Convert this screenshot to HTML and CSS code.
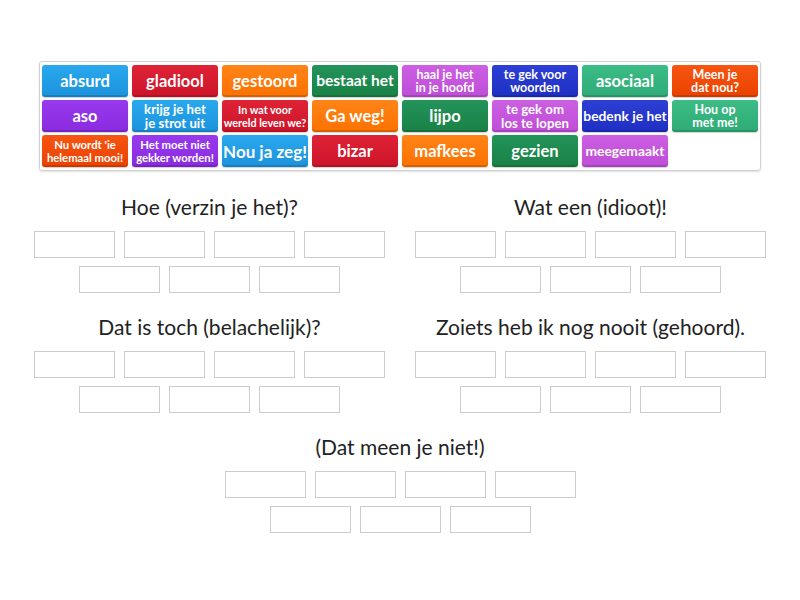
FILE: index.html
```html
<!DOCTYPE html>
<html lang="nl">
<head>
<meta charset="utf-8">
<title>Groepsindeling</title>
<link rel="stylesheet" href="styles.css">
</head>
<body>
<div class="bank">
  <div class="tile blue fs16">absurd</div>
  <div class="tile red fs16">gladiool</div>
  <div class="tile orange fs16">gestoord</div>
  <div class="tile green fs15">bestaat het</div>
  <div class="tile pink fs12">haal je het<br>in je hoofd</div>
  <div class="tile navy fs12">te gek voor<br>woorden</div>
  <div class="tile teal fs16">asociaal</div>
  <div class="tile flame fs12">Meen je<br>dat nou?</div>

  <div class="tile purple fs16">aso</div>
  <div class="tile blue fs13">krijg je het<br>je strot uit</div>
  <div class="tile red fs10">In wat voor<br>wereld leven we?</div>
  <div class="tile orange fs16">Ga weg!</div>
  <div class="tile green fs16">lijpo</div>
  <div class="tile pink fs13">te gek om<br>los te lopen</div>
  <div class="tile navy fs14">bedenk je het</div>
  <div class="tile teal fs12">Hou op<br>met me!</div>

  <div class="tile flame fs11">Nu wordt 'ie<br>helemaal mooi!</div>
  <div class="tile purple fs11">Het moet niet<br>gekker worden!</div>
  <div class="tile blue fs17">Nou ja zeg!</div>
  <div class="tile red fs16">bizar</div>
  <div class="tile orange fs16">mafkees</div>
  <div class="tile green fs16">gezien</div>
  <div class="tile pink fs14">meegemaakt</div>
</div>

<div class="groups">
  <div class="group">
    <div class="title">Hoe (verzin je het)?</div>
    <div class="slots">
      <div class="slot"></div><div class="slot"></div><div class="slot"></div><div class="slot"></div>
      <div class="slot"></div><div class="slot"></div><div class="slot"></div>
    </div>
  </div>
  <div class="group">
    <div class="title">Wat een (idioot)!</div>
    <div class="slots">
      <div class="slot"></div><div class="slot"></div><div class="slot"></div><div class="slot"></div>
      <div class="slot"></div><div class="slot"></div><div class="slot"></div>
    </div>
  </div>
  <div class="group">
    <div class="title">Dat is toch (belachelijk)?</div>
    <div class="slots">
      <div class="slot"></div><div class="slot"></div><div class="slot"></div><div class="slot"></div>
      <div class="slot"></div><div class="slot"></div><div class="slot"></div>
    </div>
  </div>
  <div class="group">
    <div class="title">Zoiets heb ik nog nooit (gehoord).</div>
    <div class="slots">
      <div class="slot"></div><div class="slot"></div><div class="slot"></div><div class="slot"></div>
      <div class="slot"></div><div class="slot"></div><div class="slot"></div>
    </div>
  </div>
  <div class="group">
    <div class="title">(Dat meen je niet!)</div>
    <div class="slots">
      <div class="slot"></div><div class="slot"></div><div class="slot"></div><div class="slot"></div>
      <div class="slot"></div><div class="slot"></div><div class="slot"></div>
    </div>
  </div>
</div>
</body>
</html>
```

FILE: styles.css
```css
html, body {
  margin: 0;
  padding: 0;
  background: #ffffff;
}

body {
  font-family: "Lato", "Open Sans", sans-serif;
  color: #222222;
}

.bank {
  box-sizing: border-box;
  width: 722px;
  margin: 61px 0 0 39px;
  padding: 3px 2px;
  border: 1px solid #d0d0d0;
  border-radius: 3px;
  box-shadow: 0 1px 2px rgba(0, 0, 0, 0.12);
  display: grid;
  grid-template-columns: repeat(8, 86px);
  grid-auto-rows: 32px;
  column-gap: 4px;
  row-gap: 3px;
}

.tile {
  display: flex;
  align-items: center;
  justify-content: center;
  text-align: center;
  color: #ffffff;
  font-weight: 700;
  border-radius: 3px;
  box-shadow: inset 0 -2px 0 rgba(0, 0, 0, 0.14), 0 1px 1px rgba(0, 0, 0, 0.18);
  overflow: hidden;
  white-space: nowrap;
}

.fs17 { font-size: 17px; line-height: 1; }
.fs16 { font-size: 16.5px; line-height: 1; }
.fs15 { font-size: 15.5px; line-height: 1; }
.fs14 { font-size: 13.8px; line-height: 1; }
.fs13 { font-size: 13.2px; line-height: 14.5px; }
.fs12 { font-size: 12.5px; line-height: 13.5px; }
.fs11 { font-size: 11.3px; line-height: 13px; }
.fs10 { font-size: 10.8px; line-height: 13px; }

.blue   { background: linear-gradient(#2aa8ee, #1b93dc); }
.red    { background: linear-gradient(#df2337, #cc1428); }
.orange { background: linear-gradient(#ff8418, #fb7200); }
.green  { background: linear-gradient(#23935a, #1a8146); }
.pink   { background: linear-gradient(#cc5fe2, #bf4dd8); }
.navy   { background: linear-gradient(#2d3fd4, #1f2fc4); }
.teal   { background: linear-gradient(#3cbc86, #2fab76); }
.flame  { background: linear-gradient(#f75512, #ea4200); }
.purple { background: linear-gradient(#9839ee, #8a2be0); }

.groups {
  width: 741px;
  margin: 22px auto 0;
  display: flex;
  flex-wrap: wrap;
  justify-content: center;
  column-gap: 21px;
}

.group {
  width: 360px;
  margin-bottom: 16px;
}

.title {
  box-sizing: border-box;
  height: 34px;
  padding-bottom: 6px;
  line-height: 28px;
  font-size: 21px;
  text-align: center;
  white-space: nowrap;
}

.slots {
  display: flex;
  flex-wrap: wrap;
  justify-content: center;
}

.slot {
  box-sizing: border-box;
  width: 81px;
  height: 27px;
  margin: 4px 4.5px;
  border: 1px solid #cccccc;
  background: #ffffff;
}
```
